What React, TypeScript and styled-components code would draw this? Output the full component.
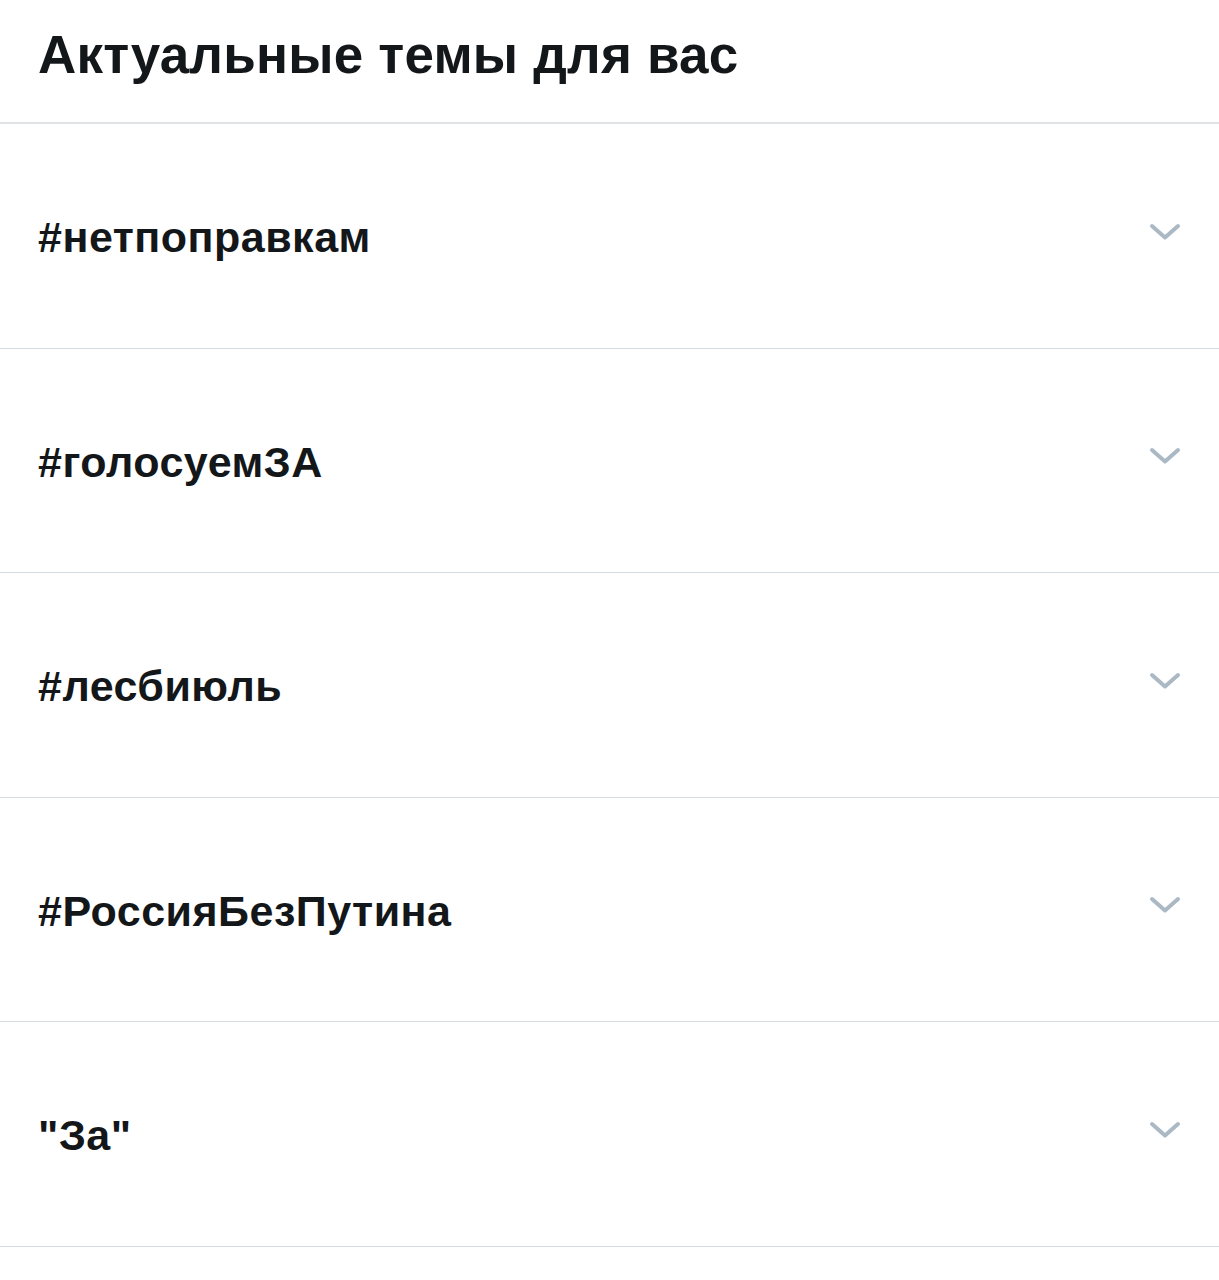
import React from "react";
import styled, { createGlobalStyle } from "styled-components";

const GlobalStyle = createGlobalStyle`
  body {
    margin: 0;
    background: #ffffff;
    font-family: "Liberation Sans", Arial, Helvetica, sans-serif;
  }
`;

const trends = [
  "#нетпоправкам",
  "#голосуемЗА",
  "#лесбиюль",
  "#РоссияБезПутина",
  '"За"',
];

const Chevron = () => (
  <svg width="34" height="20" viewBox="0 0 34 20" fill="none">
    <path
      d="M4 4 L17 15.5 L30 4"
      stroke="#abb9c4"
      strokeWidth="4"
      strokeLinecap="round"
      strokeLinejoin="round"
    />
  </svg>
);

const App = () => {
  return (
    <Page>
      <GlobalStyle />
      <Header>
        <Title>Актуальные темы для вас</Title>
      </Header>
      {trends.map((t) => (
        <Row key={t}>
          <Tag>{t}</Tag>
          <More>
            <Chevron />
          </More>
        </Row>
      ))}
    </Page>
  );
};

export default App;

const Page = styled.div`
  width: 1219px;
  background: #ffffff;
`;

const Header = styled.div`
  height: 122px;
  display: flex;
  align-items: center;
  padding: 0 38px;
  border-bottom: 2px solid #dfe3e6;
`;

const Title = styled.h1`
  margin: 0 0 14px;
  font-size: 53px;
  font-weight: 700;
  color: #14171a;
  letter-spacing: 0.2px;
`;

const Row = styled.div`
  height: 223.5px;
  display: flex;
  align-items: center;
  justify-content: space-between;
  padding: 0 37px 0 38px;
  border-bottom: 1px solid #d3dbe0;
`;

const Tag = styled.div`
  font-size: 43px;
  font-weight: 700;
  color: #14171a;
  letter-spacing: 0.5px;
  margin-top: 4px;
`;

const More = styled.div`
  display: flex;
  align-items: center;
  margin-bottom: 8px;
`;
